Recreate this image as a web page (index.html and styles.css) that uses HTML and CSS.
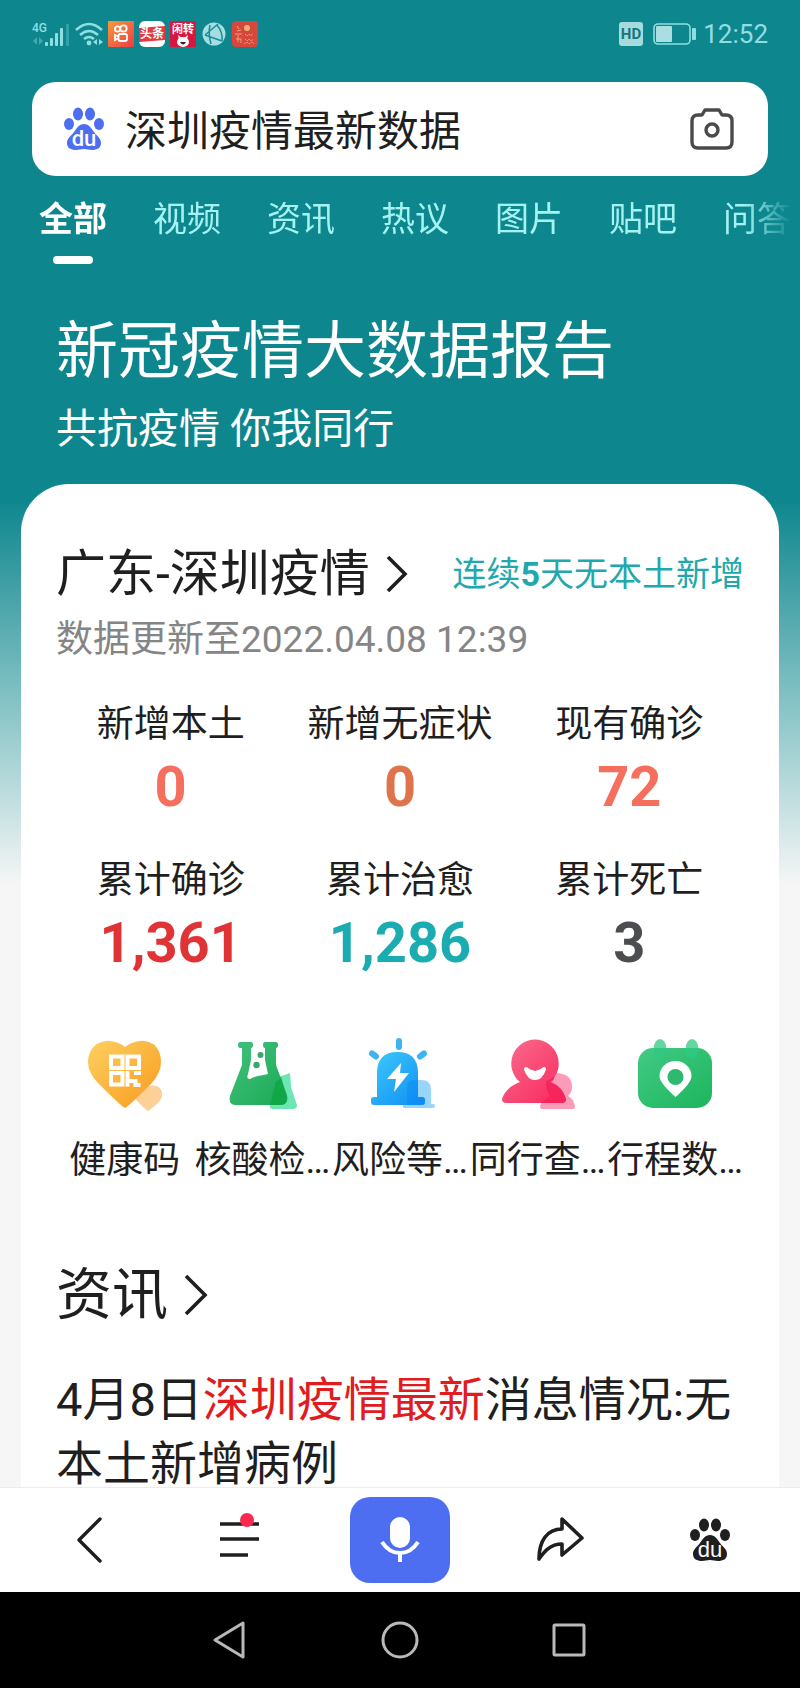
FILE: index.html
```html
<!DOCTYPE html>
<html lang="zh-CN">
<head>
  <meta charset="UTF-8">
  <meta name="viewport" content="width=device-width, initial-scale=1">
  <title>深圳疫情最新数据</title>
  <link rel="stylesheet" href="styles.css">
</head>
<body>
  <div class="page">
    <!-- 状态栏 -->
    <div class="status-bar">
      <div class="status-left">
        <svg width="38" height="26" viewBox="0 0 38 26" fill="#8fdfe2">
          <text x="0" y="11" font-size="12" font-weight="500">4G</text>
          <path d="M1 20l4-4v8zM7 16l4 4-4 4z" opacity=".4"/>
          <rect x="13" y="21" width="3" height="4" rx="1"/>
          <rect x="18" y="17" width="3" height="8" rx="1"/>
          <rect x="23" y="12" width="3" height="13" rx="1"/>
          <rect x="28" y="7" width="3" height="18" rx="1"/>
          <rect x="34" y="3" width="3" height="22" rx="1" opacity=".3"/>
        </svg>
        <svg width="28" height="26" viewBox="0 0 28 26" fill="none" stroke="#8fdfe2" stroke-width="2.6">
          <path d="M1 9q13-12 26 0M5 14q9-8 18 0M9 18q5-4 10 0"/>
          <circle cx="14" cy="22" r="2.4" fill="#8fdfe2" stroke="none"/>
          <path d="M22 18v6l-4-3zM24 18v6l4-3z" fill="#8fdfe2" stroke="none"/>
        </svg>
        <svg width="26" height="26" viewBox="0 0 26 26">
          <defs>
            <linearGradient id="kuai" x1="0" y1="0" x2="1" y2="1">
              <stop offset="0" stop-color="#f79a3c"/>
              <stop offset="1" stop-color="#ef3b45"/>
            </linearGradient>
          </defs>
          <rect width="26" height="26" rx="1" fill="url(#kuai)"/>
          <g fill="none" stroke="#fff" stroke-width="1.8">
            <circle cx="9.500" cy="8" r="2.600"/>
            <circle cx="15.500" cy="7.500" r="3.200"/>
            <rect x="10.500" y="13" width="8.500" height="7" rx="2"/>
            <path d="M10 15.500l-3-1.500v5l3-1.500"/>
          </g>
        </svg>
        <svg width="26" height="26" viewBox="0 0 26 26">
          <rect width="26" height="26" rx="6" fill="#fff"/>
          <path d="M0 7l26-2v14L0 21z" fill="#e5393f"/>
          <text x="13" y="17" font-size="12" font-weight="700" fill="#fff" text-anchor="middle">头条</text>
        </svg>
        <svg width="26" height="26" viewBox="0 0 26 26">
          <rect width="26" height="26" rx="1" fill="#d8173f"/>
          <text x="13" y="12" font-size="11" font-weight="700" fill="#fff" text-anchor="middle">闲转</text>
          <ellipse cx="13" cy="21" rx="6" ry="5" fill="#fff"/>
          <path d="M9 19l-1-5 4 3zM17 19l1-5-4 3z" fill="#fff"/>
          <path d="M10 21q3 5 6 0z" fill="#3b1a20"/>
        </svg>
        <svg width="26" height="26" viewBox="0 0 26 26" fill="none" stroke="#1b8f96" stroke-width="1.6">
          <circle cx="13" cy="13" r="11.500" fill="#a5dde2" stroke="none"/>
          <path d="M4 14L17 3M9 4q-2 9 1 19M4 14l17 6M16 4q6 7 5 16"/>
        </svg>
        <svg width="26" height="26" viewBox="0 0 26 26">
          <rect width="26" height="26" rx="4" fill="#d8473d"/>
          <circle cx="15" cy="7" r="3" fill="#f0b26d"/>
          <path d="M5 5l2 3M5 10l4-1M6 14v7M4 18h5v4M3 13h7" stroke="#f0a070" fill="none"/>
          <path d="M13 13l2 2 2-2 2 2 2-3M13 18l2 2 2-2 2 2 3-2M12 23l3-2 2 2 3-2 2 2" stroke="#eda46c" stroke-dasharray="2 1" fill="none"/>
        </svg>
      </div>
      <div class="status-right">
        <svg width="24" height="24" viewBox="0 0 24 24">
          <rect width="24" height="24" rx="3" fill="#a6dbde"/>
          <text x="12" y="17" font-size="15" font-weight="700" fill="#14777e" text-anchor="middle">HD</text>
        </svg>
        <svg class="battery" width="44" height="22" viewBox="0 0 44 22">
          <rect x="1" y="1" width="36" height="20" rx="4" fill="none" stroke="#8fdfe2" stroke-width="1.6"/>
          <rect x="3" y="3" width="16" height="16" rx="1" fill="#a9dfe2"/>
          <rect x="39" y="5" width="4" height="12" rx="1" fill="#8fdfe2"/>
        </svg>
        <span class="clock">12:52</span>
      </div>
    </div>

    <main class="content">
      <!-- 搜索框 -->
      <form class="search">
        <svg width="42" height="44" viewBox="0 0 42 44" fill="#4e6ef2">
          <ellipse cx="15" cy="7" rx="5" ry="6.500"/>
          <ellipse cx="27" cy="7" rx="5" ry="6.500"/>
          <ellipse cx="6" cy="17" rx="5" ry="6"/>
          <ellipse cx="36" cy="17" rx="5" ry="6"/>
          <path d="M21 17c5 0 7 4 10 8s7 6 7 11-4 7-9 7c-3 0-5-1-8-1s-5 1-8 1c-5 0-9-2-9-7s4-7 7-11 5-8 10-8z"/>
          <text x="21" y="39" font-size="22" font-weight="500" fill="#fff" text-anchor="middle">du</text>
        </svg>
        <input class="search-input" type="text" value="深圳疫情最新数据" aria-label="搜索">
        <button type="button" aria-label="拍照搜索">
          <svg width="44" height="42" viewBox="0 0 44 42" fill="none" stroke="#4a4a4a" stroke-width="3.4" stroke-linejoin="round">
            <path d="M8 7h4l3-5h14l3 5h4q6 0 6 6v21q0 6-6 6H8q-6 0-6-6V13q0-6 6-6z"/>
            <circle cx="22" cy="22" r="6"/>
          </svg>
        </button>
      </form>

      <nav class="tabs">
        <a class="tab active" href="#">全部</a>
        <a class="tab" href="#">视频</a>
        <a class="tab" href="#">资讯</a>
        <a class="tab" href="#">热议</a>
        <a class="tab" href="#">图片</a>
        <a class="tab" href="#">贴吧</a>
        <a class="tab" href="#">问答</a>
      </nav>

      <header class="hero">
        <h1>新冠疫情大数据报告</h1>
        <p>共抗疫情 你我同行</p>
      </header>

      <section class="card">
        <div class="card-head">
          <a class="card-title" href="#">广东-深圳疫情
            <svg width="22" height="38" viewBox="0 0 22 38" fill="none" stroke="#1f1f1f" stroke-width="3.600"><path d="M2 2l17 17L2 36"/></svg>
          </a>
          <span class="notice">连续<b>5</b>天无本土新增</span>
        </div>
        <p class="update-time">数据更新至2022.04.08 12:39</p>

        <!-- 疫情数据 -->
        <dl class="stats">
          <div class="stat"><dt>新增本土</dt><dd class="coral">0</dd></div>
          <div class="stat"><dt>新增无症状</dt><dd class="orange">0</dd></div>
          <div class="stat"><dt>现有确诊</dt><dd class="coral">72</dd></div>
          <div class="stat"><dt>累计确诊</dt><dd class="red">1,361</dd></div>
          <div class="stat"><dt>累计治愈</dt><dd class="teal">1,286</dd></div>
          <div class="stat"><dt>累计死亡</dt><dd class="gray">3</dd></div>
        </dl>

        <!-- 快捷入口 -->
        <div class="services">
          <a class="service" href="#">
            <svg width="80" height="80" viewBox="0 0 80 80">
              <defs>
                <linearGradient id="heart" x1="0" y1="0" x2="1" y2="1">
                  <stop offset="0" stop-color="#fdd062"/>
                  <stop offset="1" stop-color="#f99a1c"/>
                </linearGradient>
              </defs>
              <path d="M40 73Q36 71 14 49Q3 38 3 27Q3 16 11 9.500Q18 5 25 6Q34 7 40 12Q46 7 55 6Q62 5 69 9.500Q76 16 76 27Q76 38 66 49Q44 71 40 73z" fill="url(#heart)"/>
              <path d="M63 76Q61 75 53 67Q48 62 49 56Q52 48 60 50Q63 52 65 51Q74 49 77 57Q78 63 73 68Q65 75 63 76z" fill="#f9a940" opacity=".55"/>
              <g fill="none" stroke="#fff" stroke-width="4">
                <rect x="26" y="21.500" width="11.500" height="11.500"/>
                <rect x="42.500" y="21.500" width="11.500" height="11.500"/>
                <rect x="26" y="38" width="11.500" height="11.500"/>
                <path d="M42.500 36v15.500M42.500 46h8v4h5M49 38h7"/>
              </g>
            </svg>
            <span>健康码</span>
          </a>
          <a class="service" href="#">
            <svg width="80" height="80" viewBox="0 0 80 80">
              <defs>
                <linearGradient id="flask" x1="0" y1="0" x2="1" y2="1">
                  <stop offset="0" stop-color="#43c27d"/>
                  <stop offset="1" stop-color="#1aa955"/>
                </linearGradient>
              </defs>
              <path d="M54 43l14-5 1 14 6 18q0 4-4 4H51q-4 0-3-4l6-14z" fill="#52e3a4" opacity=".85"/>
              <path d="M18 7h11q2 0 2 3t-2 3v12l-3 14q-2 5 2 5 4-2 8-3 6-1 10-2l-3-14V13q-2 0-2-3t2-3h11q2 0 2 3t-2 3v17l11 30q2 10-6 10H14q-8 0-6-9l12-31V13h-2q-2 0-2-3t2-3z" fill="url(#flask)"/>
              <path d="M54 46q4 0 5-5l5 20q2 9-6 9H48z" fill="#0ba43f" opacity=".7"/>
              <circle cx="38.500" cy="20" r="3" fill="#35a86c"/>
              <circle cx="34.500" cy="30" r="3.200" fill="#35a86c"/>
            </svg>
            <span>核酸检…</span>
          </a>
          <a class="service" href="#">
            <svg width="80" height="80" viewBox="0 0 80 80">
              <defs>
                <linearGradient id="siren" x1="0" y1="0" x2="1" y2="1">
                  <stop offset="0" stop-color="#3dcbfb"/>
                  <stop offset="1" stop-color="#108bf3"/>
                </linearGradient>
              </defs>
              <g stroke="#3fb4f2" stroke-width="6" stroke-linecap="round">
                <path d="M39 6v6M12 18.500l4 3M64 18.500l-4 3"/>
              </g>
              <path d="M47 69V52q0-7 7-7h7q10 0 10 9v15h2q2 0 2 2t-2 2H43v-4z" fill="#55b7f9" opacity=".6"/>
              <path d="M17 62V38Q17 17 37.500 17T58 38v24h4q3 0 3 3v2q0 3-3 3H14q-3 0-3-3v-2q0-3 3-3z" fill="url(#siren)"/>
              <path d="M47 70V52q0-7 7-7h4v17h4q3 0 3 3v2q0 3-3 3z" fill="#0a8cf5" opacity=".5"/>
              <path d="M41 28L27 44h9l-2 13 15-19h-9z" fill="#fff"/>
            </svg>
            <span>风险等…</span>
          </a>
          <a class="service" href="#">
            <svg width="80" height="80" viewBox="0 0 80 80">
              <defs>
                <linearGradient id="person" x1="0" y1="0" x2="1" y2="1">
                  <stop offset="0" stop-color="#fb6d8e"/>
                  <stop offset="1" stop-color="#f7275c"/>
                </linearGradient>
              </defs>
              <path d="M37 4.500A24 24 0 0 1 52 47Q64 51 68 64q0 4-4 4H8q-4 0-4-4Q8 52 22 47A24 24 0 0 1 37 4.500z" fill="url(#person)"/>
              <path d="M57 38q17 0 17 14 0 6-4 9 5 2 7 10 0 3-2 3H44q-2 0-2-3 3-8 10-10-6-7-4-16 3-7 9-7z" fill="#f7487d" opacity=".55"/>
              <path d="M48 46q4-1 8-5 1 4-3 6 12 5 15 17 0 4-4 4H43q3-4 9-7-5-7-4-15z" fill="#f61954" opacity=".7"/>
              <path d="M28 34q3 3 6 3 3 2 6 0 3 0 6-3-3 9-9 9t-9-9z" fill="#fff" stroke="#fff" stroke-width="4" stroke-linejoin="round"/>
            </svg>
            <span>同行查…</span>
          </a>
          <a class="service" href="#">
            <svg width="80" height="80" viewBox="0 0 80 80">
              <defs>
                <linearGradient id="trip" x1="0" y1="0" x2="1" y2="1">
                  <stop offset="0" stop-color="#42ca85"/>
                  <stop offset="1" stop-color="#1cb55c"/>
                </linearGradient>
              </defs>
              <rect x="3" y="13" width="74" height="60" rx="15" fill="url(#trip)"/>
              <g fill="#2fc983" opacity=".75">
                <ellipse cx="25" cy="14" rx="6.500" ry="10"/>
                <ellipse cx="57" cy="14" rx="6.500" ry="10"/>
              </g>
              <path d="M40.500 62Q24.500 48 24.500 41a16 15 0 0 1 32 0Q56.500 48 40.500 62z" fill="#fff"/>
              <circle cx="40.500" cy="42" r="8" fill="#2eb96e"/>
            </svg>
            <span>行程数…</span>
          </a>
        </div>

        <!-- 资讯 -->
        <h2 class="news-title">
          <a href="#">资讯
            <svg width="24" height="42" viewBox="0 0 24 42" fill="none" stroke="#1f1f1f" stroke-width="3.600"><path d="M2 2l19 19L2 40"/></svg>
          </a>
        </h2>
        <a class="news-item" href="#">4月8日<em>深圳疫情最新</em>消息情况:无本土新增病例</a>
      </section>
    </main>

    <!-- 底部工具栏 -->
    <nav class="toolbar">
      <button type="button" aria-label="返回">
        <svg width="44" height="48" viewBox="0 0 44 48" fill="none" stroke="#1f1f1f" stroke-width="3.400" stroke-linecap="round" stroke-linejoin="round"><path d="M32 3L11 24l21 21"/></svg>
      </button>
      <button type="button" aria-label="菜单">
        <svg width="44" height="48" viewBox="0 0 44 48">
          <path d="M2 8h39M2 23h39M2 39h28" stroke="#1f1f1f" stroke-width="3.400"/>
          <circle cx="29" cy="4" r="7" fill="#fb2950"/>
        </svg>
      </button>
      <button class="mic" type="button" aria-label="语音搜索">
        <svg width="40" height="48" viewBox="0 0 40 48">
          <rect x="10" y="1" width="20" height="31" rx="10" fill="#fff"/>
          <path d="M2 26Q9 37 20 37T38 26M20 36v10" fill="none" stroke="#fff" stroke-width="4"/>
        </svg>
      </button>
      <button type="button" aria-label="分享">
        <svg width="48" height="48" viewBox="0 0 48 48" fill="none" stroke="#1f1f1f" stroke-width="3.600" stroke-linejoin="round"><path d="M26 3l20 19-20 17V28C14 28 8 36 3 43 3 25 11 13 26 13z"/></svg>
      </button>
      <button type="button" aria-label="首页">
        <svg width="42" height="44" viewBox="0 0 42 44" fill="#1f1f1f">
          <ellipse cx="15" cy="7" rx="5" ry="6.500"/>
          <ellipse cx="27" cy="7" rx="5" ry="6.500"/>
          <ellipse cx="6" cy="17" rx="5" ry="6"/>
          <ellipse cx="36" cy="17" rx="5" ry="6"/>
          <path d="M21 17c5 0 7 4 10 8s7 6 7 11-4 7-9 7c-3 0-5-1-8-1s-5 1-8 1c-5 0-9-2-9-7s4-7 7-11 5-8 10-8z"/>
          <text x="21" y="39" font-size="22" font-weight="500" fill="#fff" text-anchor="middle">du</text>
        </svg>
      </button>
    </nav>

    <!-- 系统导航 -->
    <div class="system-nav">
      <button type="button" aria-label="后退"><svg width="36" height="38" viewBox="0 0 36 38"><path d="M3 19L31 2v34z"/></svg></button>
      <button type="button" aria-label="主屏幕"><svg width="36" height="38" viewBox="0 0 36 38"><circle cx="18" cy="19" r="17"/></svg></button>
      <button type="button" aria-label="最近任务"><svg width="36" height="38" viewBox="0 0 36 38"><rect x="2" y="4" width="30" height="30" rx="1"/></svg></button>
    </div>
  </div>
</body>
</html>
```
FILE: styles.css
```css
* {
  box-sizing: border-box;
}
body {
  margin: 0;
  font-family: Roboto, 'Noto Sans CJK SC', sans-serif;
  color: #1f1f1f;
}
h1, h2, p, dl, dd {
  margin: 0;
  font-weight: 400;
}
a {
  color: inherit;
  text-decoration: none;
}
svg {
  display: block;
  flex: none;
  overflow: visible;
}
button {
  display: flex;
  align-items: center;
  justify-content: center;
  padding: 0;
  border: none;
  background: none;
  cursor: pointer;
}
.page {
  display: flex;
  flex-direction: column;
  height: 100vh;
  background: linear-gradient(#0e868e 500px, #83c2c5 700px, #f6f6f6 885px);
}
/* 状态栏 */
.status-bar {
  flex: none;
  display: flex;
  align-items: center;
  justify-content: space-between;
  height: 68px;
  padding: 0 32px;
}
.status-left {
  display: flex;
  align-items: center;
  gap: 5px;
}
.status-left svg + svg + svg {
  margin-right: 0;
}
.status-right {
  display: flex;
  align-items: center;
  gap: 6px;
}
.battery {
  margin-left: 4px;
}
.clock {
  font-size: 26px;
  color: #8fdfe2;
}
/* 内容区 */
.content {
  flex: 1;
  min-height: 0;
  overflow-y: auto;
  scrollbar-width: none;
}
.search {
  display: flex;
  align-items: center;
  height: 94px;
  margin: 14px 32px 0;
  padding: 0 34px 0 31px;
  background: #fff;
  border-radius: 24px;
}
.search-input {
  flex: 1;
  min-width: 0;
  height: 64px;
  padding: 0 20px 4px;
  border: none;
  outline: none;
  background: none;
  font-family: inherit;
  font-size: 42px;
  color: #1f1f1f;
}
.tabs {
  display: flex;
  gap: 46px;
  height: 88px;
  padding-top: 23px;
  margin: 0 8px 0 39px;
  overflow: hidden;
  font-size: 34px;
  line-height: 40px;
  color: #a4f3f3;
  -webkit-mask-image: linear-gradient(to left, transparent, #000 48px);
  mask-image: linear-gradient(to left, transparent, #000 48px);
}
.tab {
  flex: none;
}
.tab.active {
  color: #fff;
  font-weight: 700;
}
.tab.active::after {
  content: "";
  display: block;
  width: 40px;
  height: 8px;
  margin: 17px auto 0;
  border-radius: 4px;
  background: #fff;
}
.hero {
  padding: 52px 56px 31px;
  color: #fff;
}
.hero h1 {
  font-size: 62px;
  line-height: 72px;
}
.hero p {
  margin-top: 17px;
  font-size: 41px;
  line-height: 48px;
}
/* 疫情卡片 */
.card {
  margin: 0 21px;
  padding: 58px 35px 40px;
  background: #fff;
  border-radius: 48px 48px 0 0;
}
.card-head {
  display: flex;
  align-items: center;
  justify-content: space-between;
  line-height: 64px;
  white-space: nowrap;
}
.card-title {
  display: flex;
  align-items: center;
  gap: 16px;
  font-size: 50px;
}
.notice {
  font-size: 34px;
  color: #1fa9ad;
}
.update-time {
  margin-top: 12px;
  font-size: 37px;
  line-height: 44px;
  color: #858585;
}
.stats {
  display: grid;
  grid-template-columns: repeat(3, 1fr);
  row-gap: 42px;
  margin-top: 41px;
  text-align: center;
}
.stat dt {
  font-size: 37px;
  line-height: 44px;
}
.stat dd {
  margin-top: 10px;
  font-size: 56px;
  font-weight: 700;
  line-height: 60px;
}
.coral {
  color: #f66f5e;
}
.orange {
  color: #df734c;
}
.red {
  color: #e03336;
}
.teal {
  color: #1aacb0;
}
.gray {
  color: #4b4d50;
}
.services {
  display: grid;
  grid-template-columns: repeat(5, 1fr);
  margin-top: 62px;
}
.service {
  display: flex;
  flex-direction: column;
  align-items: center;
  gap: 24px;
  font-size: 37px;
  line-height: 44px;
  white-space: nowrap;
}
/* 资讯列表 */
.news-title {
  margin-top: 80px;
  font-size: 56px;
  line-height: 64px;
}
.news-title a {
  display: flex;
  align-items: center;
  gap: 16px;
}
.news-item {
  display: block;
  margin-top: 41px;
  font-size: 47px;
  line-height: 64px;
}
.news-item em {
  font-style: normal;
  color: #e01c1f;
}
/* 底部工具栏 */
.toolbar {
  flex: none;
  display: grid;
  grid-template-columns: 37fr 38fr 42fr 38fr 37fr;
  align-items: center;
  justify-items: center;
  height: 105px;
  padding: 0 16px;
  border-top: 1px solid #ececec;
  background: #fff;
}
.mic {
  width: 100px;
  height: 86px;
  border-radius: 20px;
  background: #4e6ef2;
}
/* 系统导航 */
.system-nav {
  flex: none;
  display: flex;
  align-items: center;
  justify-content: center;
  gap: 134px;
  height: 96px;
  background: #000;
}
.system-nav svg {
  fill: none;
  stroke: #b9b9b9;
  stroke-width: 3;
  stroke-linejoin: round;
}
```
